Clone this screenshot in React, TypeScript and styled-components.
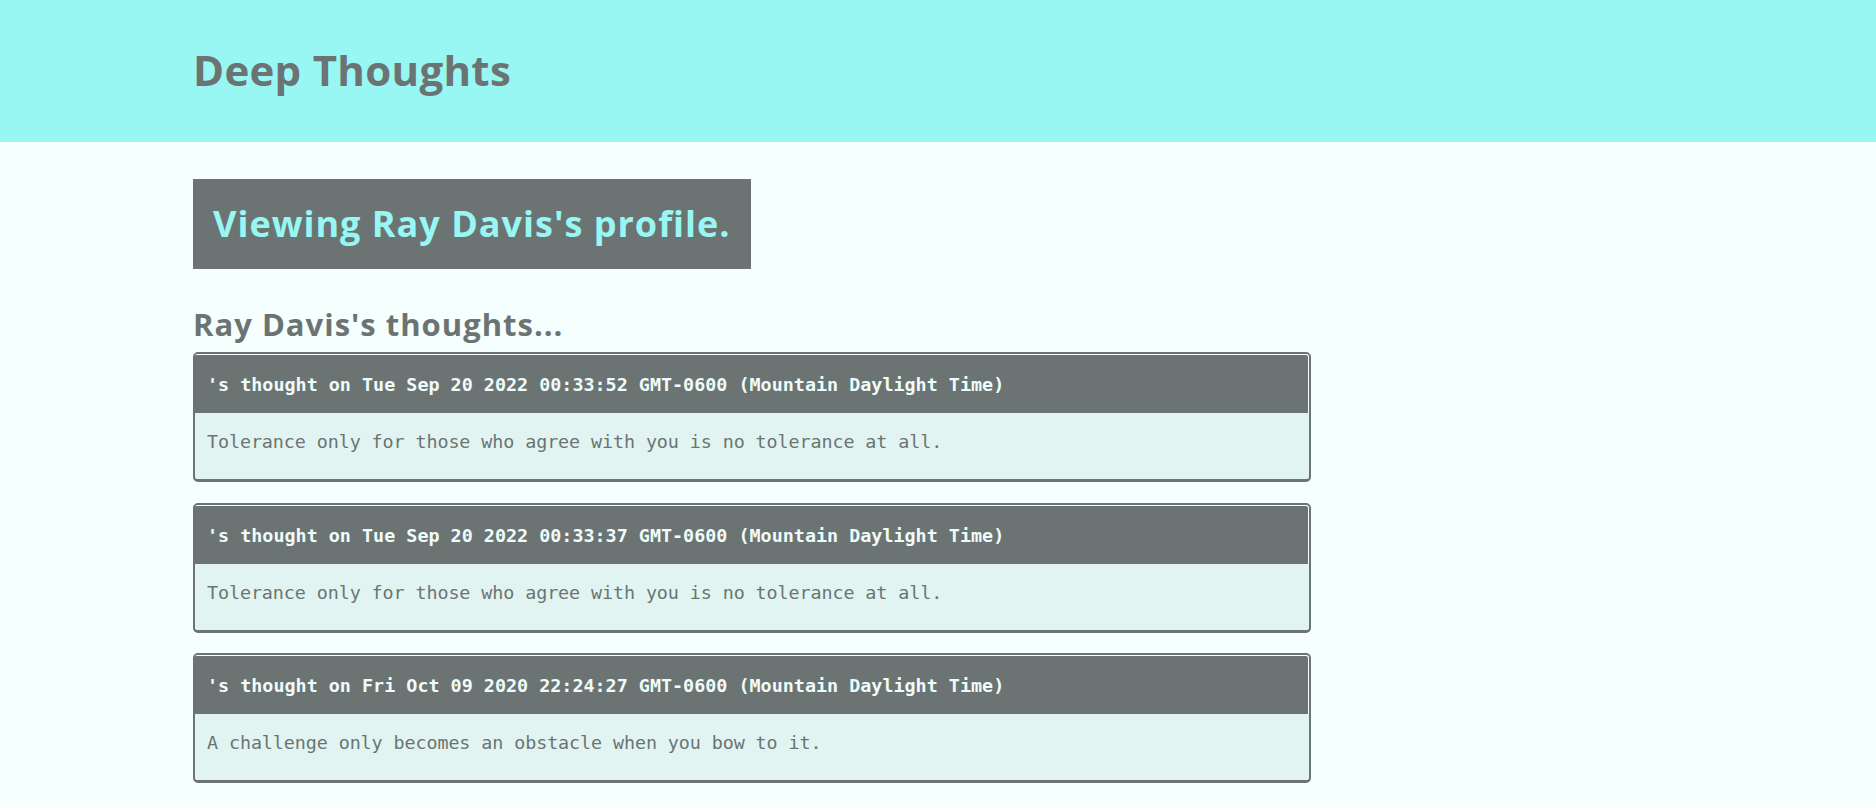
import styled, { createGlobalStyle } from 'styled-components';

const COLOR = {
  AQUA: '#98f7f2',
  DARK: '#6c7473',
  LIGHT: '#e1f4f2',
  PAGE: '#f5fffd',
  CARD_TITLE: '#eefcfb',
};

const thoughts = [
  {
    id: 1,
    createdAt: 'Tue Sep 20 2022 00:33:52 GMT-0600 (Mountain Daylight Time)',
    text: 'Tolerance only for those who agree with you is no tolerance at all.',
  },
  {
    id: 2,
    createdAt: 'Tue Sep 20 2022 00:33:37 GMT-0600 (Mountain Daylight Time)',
    text: 'Tolerance only for those who agree with you is no tolerance at all.',
  },
  {
    id: 3,
    createdAt: 'Fri Oct 09 2020 22:24:27 GMT-0600 (Mountain Daylight Time)',
    text: 'A challenge only becomes an obstacle when you bow to it.',
  },
];

function App() {
  return (
    <>
      <GlobalStyle />
      <StHeader>
        <StContainer>
          <StLogo>Deep Thoughts</StLogo>
        </StContainer>
      </StHeader>
      <StMain>
        <StContainer>
          <StProfileBanner>Viewing Ray Davis's profile.</StProfileBanner>
          <StListTitle>Ray Davis's thoughts...</StListTitle>
          <StThoughtList>
            {thoughts.map((thought) => (
              <StCard key={thought.id}>
                <StCardHeader>'s thought on {thought.createdAt}</StCardHeader>
                <StCardBody>
                  <p>{thought.text}</p>
                </StCardBody>
              </StCard>
            ))}
          </StThoughtList>
        </StContainer>
      </StMain>
    </>
  );
}

const GlobalStyle = createGlobalStyle`
  * {
    box-sizing: border-box;
  }
  body {
    margin: 0;
    background-color: ${COLOR.PAGE};
    font-family: 'Open Sans', 'Noto Sans', sans-serif;
  }
`;

const StContainer = styled.div`
  width: 1490px;
  margin: 0 auto;
`;

const StHeader = styled.header`
  height: 142px;
  display: flex;
  align-items: center;
  background-color: ${COLOR.AQUA};
`;

const StLogo = styled.h1`
  margin: -2px 0 0 0;
  font-family: 'Open Sans', sans-serif;
  font-weight: 700;
  font-size: 42px;
  line-height: 50px;
  letter-spacing: 0.3px;
  color: ${COLOR.DARK};
`;

const StMain = styled.main`
  padding-top: 37px;
`;

const StProfileBanner = styled.h2`
  display: inline-block;
  margin: 0;
  padding: 20px 20px;
  height: 90px;
  font-family: 'Open Sans', sans-serif;
  font-weight: 700;
  font-size: 36px;
  line-height: 50px;
  letter-spacing: 1px;
  color: ${COLOR.AQUA};
  background-color: ${COLOR.DARK};
`;

const StListTitle = styled.h3`
  margin: 35px 0 8px 0;
  font-family: 'Open Sans', sans-serif;
  font-weight: 700;
  font-size: 31px;
  line-height: 40px;
  letter-spacing: 1px;
  color: ${COLOR.DARK};
`;

const StThoughtList = styled.div`
  width: 75%;
`;

const StCard = styled.div`
  height: 130px;
  margin-bottom: 20.5px;
  border: 2px solid ${COLOR.DARK};
  border-bottom-width: 3px;
  border-radius: 5px;
  overflow: hidden;
  background-color: ${COLOR.LIGHT};
  font-family: 'DejaVu Sans Mono', 'Liberation Mono', monospace;
  font-size: 18.4px;
`;

const StCardHeader = styled.h4`
  margin: 0;
  height: 59px;
  padding: 17px 12px 0 12px;
  line-height: 26px;
  font-weight: 700;
  color: ${COLOR.CARD_TITLE};
  background-color: ${COLOR.DARK};
  border-top: 1px solid ${COLOR.PAGE};
  border-right: 1px solid ${COLOR.PAGE};
  border-top-right-radius: 3px;
`;

const StCardBody = styled.div`
  padding: 16px 12px 0 12px;
  color: ${COLOR.DARK};

  p {
    margin: 0;
    line-height: 26px;
    letter-spacing: -0.1px;
  }
`;

export default App;
